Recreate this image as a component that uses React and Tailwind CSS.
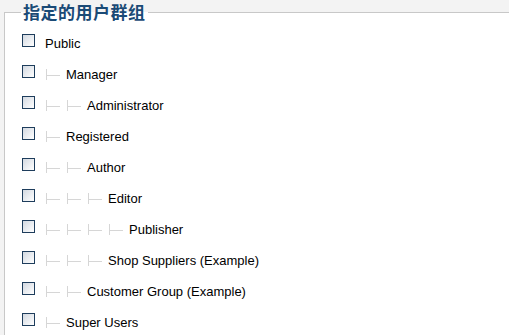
const groups = [
  { label: 'Public', level: 0 },
  { label: 'Manager', level: 1 },
  { label: 'Administrator', level: 2 },
  { label: 'Registered', level: 1 },
  { label: 'Author', level: 2 },
  { label: 'Editor', level: 3 },
  { label: 'Publisher', level: 4 },
  { label: 'Shop Suppliers (Example)', level: 3 },
  { label: 'Customer Group (Example)', level: 2 },
  { label: 'Super Users', level: 1 },
];

// one "|—" step of the tree indent
const Step = () => (
  <span className="relative w-[21px] h-[31px] shrink-0">
    <span className="absolute left-[1px] top-[4px] w-px h-[11px] bg-[#d6d6d6]" />
    <span className="absolute left-[2px] top-[10px] w-[13px] h-px bg-[#d6d6d6]" />
  </span>
);

const Check = () => (
  <span className="block w-[13px] h-[13px] shrink-0 border border-[#1e3d5c] bg-linear-to-br from-[#d3d9e1] to-white" />
);

export default function App() {
  return (
    <div className="w-[509px] h-[335px] overflow-hidden bg-[#f3f3f3] font-['Liberation_Sans',Arial,sans-serif]">
      <fieldset className="ml-[4px] mt-px w-[540px] border border-[#c8c8c8] bg-white pl-[17px] pt-[11px] pb-4">
        <legend className="-ml-px px-[2px] text-[17px] leading-[22px] tracking-[0.5px] font-bold text-[#1a4a76] font-['Noto_Sans_CJK_SC',sans-serif]">
          指定的用户群组
        </legend>
        <ul>
          {groups.map((g) => (
            <li key={g.label} className="flex items-start h-[31px]">
              <Check />
              <div className="flex ml-[10px]">
                {Array.from({ length: g.level }).map((_, i) => (
                  <Step key={i} />
                ))}
                <span className="mt-[2px] text-[13px] leading-[15px] text-black">{g.label}</span>
              </div>
            </li>
          ))}
        </ul>
      </fieldset>
    </div>
  );
}
